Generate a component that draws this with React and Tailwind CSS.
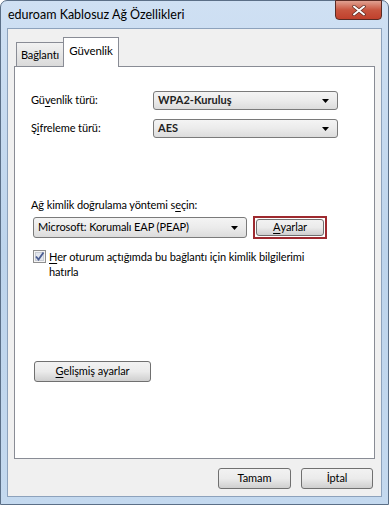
import React from "react";

const U = ({ children }) => <span className="underline underline-offset-[2px]">{children}</span>;

const Arrow = () => (
  <svg width="7" height="4" viewBox="0 0 7 4" className="shrink-0">
    <path d="M0 0 H7 L3.5 4 Z" fill="#000" />
  </svg>
);

const Dropdown = ({ value, className, bold }) => (
  <div
    className={`flex items-center justify-between rounded-[3px] border border-[#7a7a7a] bg-gradient-to-b from-[#f4f4f4] via-[#ebebeb] to-[#dcdcdc] pl-[4px] pr-[8px] ${className}`}
  >
    <span className={bold ? "text-[11px] font-bold tracking-normal text-[#222]" : "text-[11px] text-black"}>{value}</span>
    <Arrow />
  </div>
);

const Button = ({ children, className }) => (
  <div
    className={`flex items-center justify-center rounded-[3px] border border-[#707070] bg-gradient-to-b from-[#f2f2f2] via-[#ebebeb] to-[#cfcfcf] text-[11px] text-black ${className}`}
  >
    {children}
  </div>
);

export default function App() {
  return (
    <div className="w-[389px] h-[505px] font-['Lato',sans-serif] text-[11px] tracking-[-0.1px] text-black">
      <div className="flex h-full w-full flex-col rounded-t-[7px] border border-[#5b6f87] bg-gradient-to-b from-[#cfe0f3] via-[#bdd4ec] to-[#c4d9ef]">
        {/* title bar */}
        <div className="flex h-[27px] shrink-0 items-start justify-between">
          <span className="pl-[7px] pt-[6px] text-[12.5px] leading-[15px] tracking-normal text-black">eduroam Kablosuz Ağ Özellikleri</span>
          <div className="mr-[6px] -mt-px flex h-[20px] w-[47px] items-center justify-center rounded-b-[4px] border border-[#5a2b24] bg-gradient-to-b from-[#e0a192] via-[#c8553f] to-[#c0402c]">
            <svg width="14" height="11" viewBox="0 0 14 11">
              <path d="M2 1.5 L12 9.5 M12 1.5 L2 9.5" stroke="#5a2a22" strokeWidth="3.4" strokeLinecap="round" />
              <path d="M2 1.5 L12 9.5 M12 1.5 L2 9.5" stroke="#fff" strokeWidth="2" strokeLinecap="round" />
            </svg>
          </div>
        </div>

        {/* client area */}
        <div className="mx-[6px] mb-[7px] flex flex-1 flex-col border border-[#8da2bc] bg-[#f0f0f0] px-[6px] pt-[8px]">
          {/* tabs */}
          <div className="relative z-10 -mb-px flex items-end pl-[2px]">
            <div className="mb-px flex h-[24px] w-[48px] items-center justify-center border border-b-0 border-[#898c95] bg-gradient-to-b from-[#f2f2f2] to-[#dadada] pt-[2px]">
              Bağlantı
            </div>
            <div className="-ml-px flex h-[30px] w-[56px] items-start justify-center border border-b-0 border-[#898c95] bg-white pt-[4px] text-[11.5px]">
              Güvenlik
            </div>
          </div>

          {/* panel */}
          <div className="flex h-[393px] flex-col border border-[#898c95] bg-white pl-[16px] pt-[24px]">
            <div className="flex items-center">
              <span className="w-[122px]">
                Gü<U>v</U>enlik türü:
              </span>
              <Dropdown value="WPA2-Kuruluş" bold className="h-[19px] w-[185px]" />
            </div>
            <div className="mt-[9px] flex items-center">
              <span className="w-[122px]">
                Ş<U>i</U>freleme türü:
              </span>
              <Dropdown value="AES" bold className="h-[19px] w-[185px]" />
            </div>

            <div className="mt-[59px] leading-[15px]">
              Ağ kimlik doğrulama yöntemi s<U>e</U>çin:
            </div>
            <div className="mt-[4px] flex items-center">
              <Dropdown value="Microsoft: Korumalı EAP (PEAP)" className="ml-[2px] h-[21px] w-[214px]" />
              <div className="ml-[6px] border-2 border-[#9e2a2f] p-[1px]">
                <Button className="h-[17px] w-[68px]">
                  <U>A</U>yarlar
                </Button>
              </div>
            </div>

            <div className="mt-[10px] flex items-start pl-[2px]">
              <svg width="13" height="13" viewBox="0 0 13 13" className="mt-px shrink-0">
                <rect x="0.5" y="0.5" width="12" height="12" fill="#f4f4f4" stroke="#8f8f8f" />
                <rect x="2.5" y="2.5" width="8" height="8" fill="#e2e6ee" stroke="#c7cbd3" />
                <path d="M3 6.5 L5.5 9.5 L10.5 2.5" fill="none" stroke="#4a5d93" strokeWidth="1.8" />
              </svg>
              <span className="ml-[3px] leading-[15px]">
                <U>H</U>er oturum açtığımda bu bağlantı için kimlik bilgilerimi
                <br />
                hatırla
              </span>
            </div>

            <Button className="ml-[3px] mt-[82px] h-[21px] w-[117px]">
              <span>
                <U>G</U>elişmiş ayarlar
              </span>
            </Button>
          </div>

          {/* bottom buttons */}
          <div className="mt-[9px] flex justify-end gap-[10px] pr-[2px]">
            <Button className="h-[21px] w-[73px] border-[#3c7fb1] from-[#eaf6fd] via-[#d9f0fc] to-[#a7d9f5]">Tamam</Button>
            <Button className="h-[21px] w-[72px]">İptal</Button>
          </div>
        </div>
      </div>
    </div>
  );
}
